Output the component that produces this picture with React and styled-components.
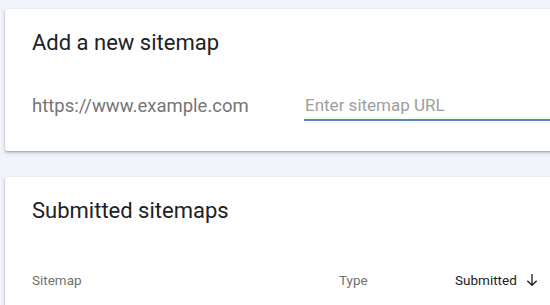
import React from 'react';
import styled, {createGlobalStyle} from 'styled-components';

const GlobalStyle = createGlobalStyle`
  body {
    margin: 0;
    background: #f1f4fb;
    font-family: Roboto, "Liberation Sans", sans-serif;
    overflow: hidden;
  }
`;

const Page = styled.div`
  display: flex;
  flex-direction: column;
  gap: 26px;
  padding: 9px 0 0 5px;
  width: 600px;
`;

const Card = styled.section`
  background: #fff;
  border-radius: 2px;
  box-shadow: 0 1px 2px rgba(60, 64, 67, 0.35), 0 2px 4px rgba(60, 64, 67, 0.2);
  padding: ${({pad}) => pad || '20px 27px 30px'};
`;

const Title = styled.h2`
  margin: 0;
  font-size: 22px;
  font-weight: 400;
  color: #202124;
  line-height: 28px;
`;

const FormRow = styled.div`
  display: flex;
  align-items: flex-end;
  margin-top: 37px;
`;

const Prefix = styled.span`
  width: 272px;
  font-size: 18.5px;
  color: #757575;
  line-height: 24px;
  padding-bottom: 3px;
`;

const UrlInput = styled.input`
  flex: 1;
  border: none;
  border-bottom: 2px solid #5b86c5;
  outline: none;
  padding: 0 1px 3px;
  font-family: inherit;
  font-size: 17px;
  line-height: 22px;
  color: #202124;
  background: transparent;
  &::placeholder {
    color: #9e9e9e;
  }
`;

const Header = styled.div`
  display: grid;
  grid-template-columns: 307px 116px auto;
  align-items: center;
  margin-top: 47px;
  font-size: 13.5px;
`;

const Col = styled.span`
  display: flex;
  align-items: center;
  gap: 7px;
  color: ${({active}) => (active ? '#202124' : '#6f6f6f')};
`;

const Arrow = () => (
  <svg width="16" height="16" viewBox="0 0 24 24" fill="none" stroke="#202124" strokeWidth="2">
    <path d="M12 3v17M5 13l7 7 7-7" />
  </svg>
);

export default function App() {
  return (
    <Page>
      <GlobalStyle />
      <Card>
        <Title>Add a new sitemap</Title>
        <FormRow>
          <Prefix>https://www.example.com</Prefix>
          <UrlInput placeholder="Enter sitemap URL" />
        </FormRow>
      </Card>
      <Card pad="20px 27px 30px">
        <Title>Submitted sitemaps</Title>
        <Header>
          <Col>Sitemap</Col>
          <Col>Type</Col>
          <Col active>Submitted <Arrow /></Col>
        </Header>
      </Card>
    </Page>
  );
}
